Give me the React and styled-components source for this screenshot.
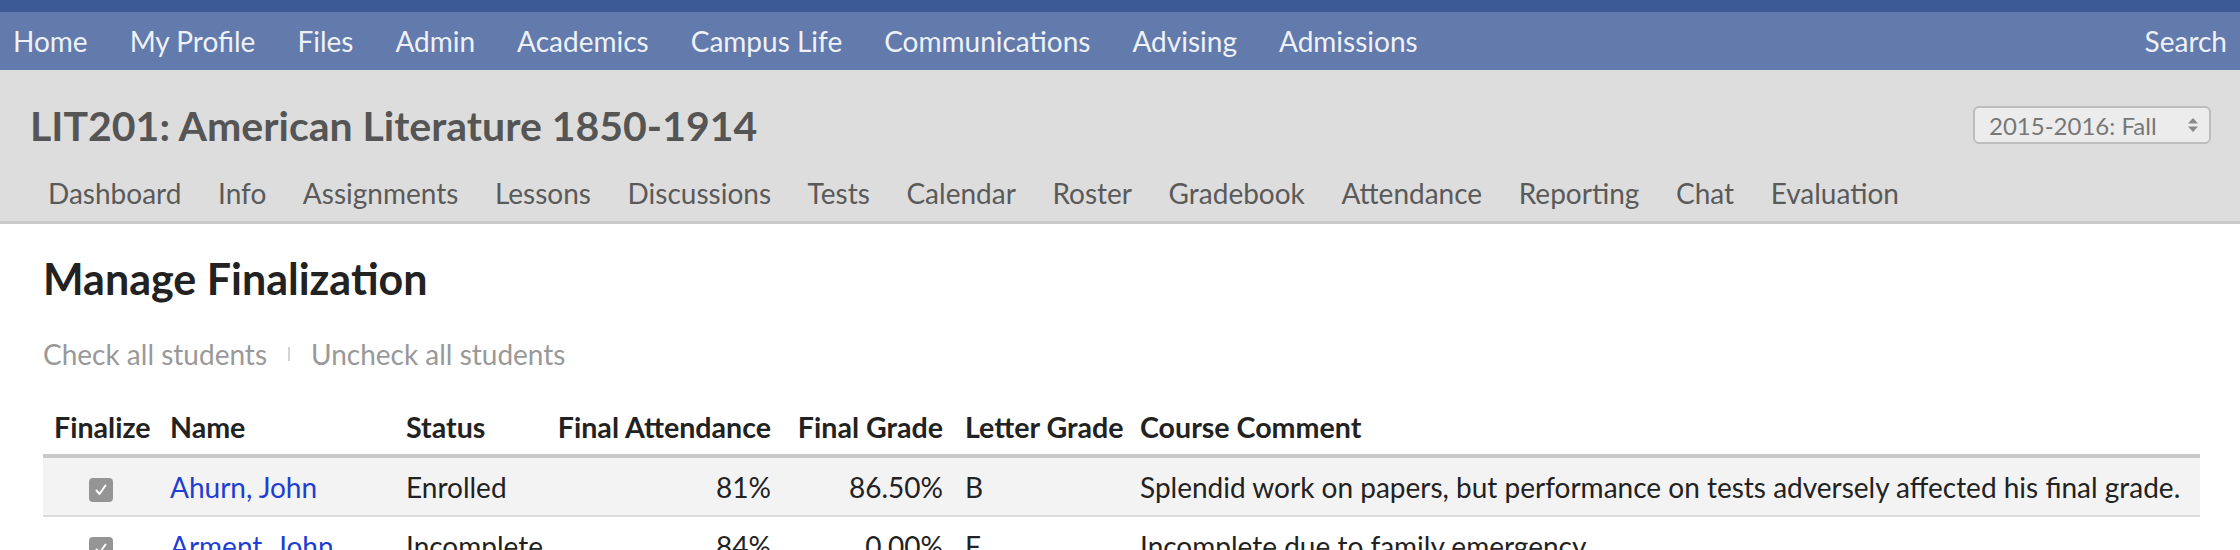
import React from 'react';
import styled, { createGlobalStyle } from 'styled-components';

const GlobalStyle = createGlobalStyle`
  html, body { margin: 0; padding: 0; background: #fff; }
  body { font-family: Lato, "Liberation Sans", Arial, sans-serif; color: #222; }
`;

const TopStrip = styled.div`
  height: 12px;
  background: #3b5a96;
`;

const MainNav = styled.nav`
  height: 58px;
  background: #627aac;
  display: flex;
  align-items: center;
  justify-content: space-between;
  padding: 0 13px;
`;

const NavGroup = styled.div`
  display: flex;
  gap: 42px;
`;

const NavLink = styled.a`
  color: #eef1f8;
  font-size: 28px;
  text-decoration: none;
`;

const CourseHeader = styled.header`
  background: #dddddd;
  border-bottom: 3px solid #c9c9c9;
  padding: 27px 29px 8px 30px;
`;

const TitleRow = styled.div`
  height: 56px;
  display: flex;
  align-items: center;
  justify-content: space-between;
`;

const CourseTitle = styled.h1`
  margin: 0;
  font-size: 41px;
  font-weight: 700;
  color: #555;
`;

const TermSelect = styled.div`
  width: 238px;
  height: 38px;
  box-sizing: border-box;
  border: 2px solid #bdbdbd;
  border-radius: 6px;
  background: #ececec;
  display: flex;
  align-items: center;
  justify-content: space-between;
  padding: 0 10px 0 14px;
  font-size: 24px;
  color: #777;
`;

const SubNav = styled.div`
  display: flex;
  gap: 36.6px;
  height: 40px;
  align-items: center;
  margin-top: 20px;
  padding-left: 18px;
`;

const SubLink = styled.a`
  font-size: 28px;
  color: #5a5a5a;
  text-decoration: none;
`;

const Content = styled.main`
  padding: 31px 40px 0 43px;
`;

const PageTitle = styled.h2`
  margin: 0;
  font-size: 43px;
  line-height: 48px;
  font-weight: 700;
  color: #222;
`;

const Actions = styled.div`
  margin-top: 33px;
  height: 36px;
  display: flex;
  align-items: center;
  gap: 21px;
  font-size: 28px;
  color: #999;
`;

const Divider = styled.span`
  width: 2px;
  height: 14px;
  background: #d4d4d4;
`;

const Table = styled.table`
  margin-top: 28px;
  width: 100%;
  border-collapse: collapse;
  table-layout: fixed;
  font-size: 28px;
`;

const Th = styled.th`
  height: 54px;
  padding: 0 11px;
  font-size: 28.6px;
  font-weight: 700;
  color: #222;
  white-space: nowrap;
  text-align: ${p => p.align || 'left'};
  border-bottom: 4px solid #c9c9c9;
`;

const Row = styled.tr`
  background: ${p => (p.shade ? '#f3f3f3' : '#fff')};
  border-bottom: 2px solid #dcdcdc;
`;

const Td = styled.td`
  height: 57px;
  padding: 0 11px;
  color: #222;
  white-space: nowrap;
  text-align: ${p => p.align || 'left'};
`;

const StudentLink = styled.a`
  color: #1e3ed2;
  text-decoration: none;
`;

const Check = styled.span`
  display: inline-flex;
  width: 24px;
  height: 24px;
  border-radius: 4px;
  background: #959595;
  align-items: center;
  justify-content: center;
  vertical-align: middle;
`;

const navItems = ['Home', 'My Profile', 'Files', 'Admin', 'Academics', 'Campus Life', 'Communications', 'Advising', 'Admissions'];
const subItems = ['Dashboard', 'Info', 'Assignments', 'Lessons', 'Discussions', 'Tests', 'Calendar', 'Roster', 'Gradebook', 'Attendance', 'Reporting', 'Chat', 'Evaluation'];

const students = [
  { name: 'Ahurn, John', status: 'Enrolled', att: '81%', grade: '86.50%', letter: 'B', comment: 'Splendid work on papers, but performance on tests adversely affected his final grade.' },
  { name: 'Arment, John', status: 'Incomplete', att: '84%', grade: '0.00%', letter: 'F', comment: 'Incomplete due to family emergency.' },
];

function CheckBox() {
  return (
    <Check>
      <svg width="16" height="16" viewBox="0 0 16 16">
        <path d="M3.5 8.5 L6.5 12 L12.5 3.5" fill="none" stroke="#fff" strokeWidth="2" strokeLinecap="round" strokeLinejoin="round" />
      </svg>
    </Check>
  );
}

export default function App() {
  return (
    <>
      <GlobalStyle />
      <TopStrip />
      <MainNav>
        <NavGroup>
          {navItems.map(n => <NavLink key={n}>{n}</NavLink>)}
        </NavGroup>
        <NavLink>Search</NavLink>
      </MainNav>
      <CourseHeader>
        <TitleRow>
          <CourseTitle>LIT201: American Literature 1850-1914</CourseTitle>
          <TermSelect>
            <span>2015-2016: Fall</span>
            <svg width="12" height="18" viewBox="0 0 12 18">
              <path d="M6 2 L11 7.5 H1 Z M6 16 L11 10.5 H1 Z" fill="#8a8a8a" />
            </svg>
          </TermSelect>
        </TitleRow>
        <SubNav>
          {subItems.map(s => <SubLink key={s}>{s}</SubLink>)}
        </SubNav>
      </CourseHeader>
      <Content>
        <PageTitle>Manage Finalization</PageTitle>
        <Actions>
          <span>Check all students</span>
          <Divider />
          <span>Uncheck all students</span>
        </Actions>
        <Table>
          <colgroup>
            <col style={{ width: 116 }} />
            <col style={{ width: 236 }} />
            <col style={{ width: 150 }} />
            <col style={{ width: 237 }} />
            <col style={{ width: 172 }} />
            <col style={{ width: 175 }} />
            <col />
          </colgroup>
          <thead>
            <tr>
              <Th align="center">Finalize</Th>
              <Th>Name</Th>
              <Th>Status</Th>
              <Th align="right">Final Attendance</Th>
              <Th align="right">Final Grade</Th>
              <Th>Letter Grade</Th>
              <Th>Course Comment</Th>
            </tr>
          </thead>
          <tbody>
            {students.map((s, i) => (
              <Row key={s.name} shade={i % 2 === 0}>
                <Td align="center"><CheckBox /></Td>
                <Td><StudentLink>{s.name}</StudentLink></Td>
                <Td>{s.status}</Td>
                <Td align="right">{s.att}</Td>
                <Td align="right">{s.grade}</Td>
                <Td>{s.letter}</Td>
                <Td>{s.comment}</Td>
              </Row>
            ))}
          </tbody>
        </Table>
      </Content>
    </>
  );
}
